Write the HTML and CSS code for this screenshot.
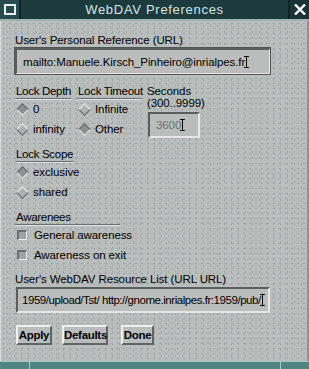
FILE: index.html
```html
<!DOCTYPE html>
<html lang="en">
<head>
  <meta charset="UTF-8" />
  <title>WebDAV Preferences</title>
  <link rel="stylesheet" href="styles.css">
</head>
<body>
  <div class="window">
    <div class="titlebar">
      <div class="tb-btn tb-menu"><span class="tb-square"></span></div>
      <div class="tb-title">WebDAV Preferences</div>
      <div class="tb-btn tb-close">
        <svg width="12" height="11" viewBox="0 0 12 11">
          <path d="M1 0.5 L11 10.5 M11 0.5 L1 10.5" stroke="#ffffff" stroke-width="2.4" />
        </svg>
      </div>
    </div>

    <div class="panel">
      <div class="field-label">User's Personal Reference (URL)</div>
      <div class="entry entry-focus">
        <span>mailto:Manuele.Kirsch_Pinheiro@inrialpes.fr</span><span class="caret"></span>
      </div>

      <div class="lock-grid">
        <div class="group">
          <div class="group-title">Lock Depth</div>
          <div class="opt"><span class="radio on"></span>0</div>
          <div class="opt"><span class="radio"></span>infinity</div>
        </div>
        <div class="group">
          <div class="group-title">Lock Timeout</div>
          <div class="opt"><span class="radio"></span>Infinite</div>
          <div class="opt"><span class="radio on"></span>Other</div>
        </div>
        <div class="seconds">
          <div class="sec-label">Seconds<br>(300..9999)</div>
          <div class="entry entry-small"><span>3600</span><span class="caret"></span></div>
        </div>
      </div>

      <div class="group scope">
        <div class="group-title">Lock Scope</div>
        <div class="opt"><span class="radio on"></span>exclusive</div>
        <div class="opt"><span class="radio"></span>shared</div>
      </div>

      <div class="group aware">
        <div class="group-title">Awarenees</div>
        <div class="opt"><span class="check"></span>General awareness</div>
        <div class="opt"><span class="check"></span>Awareness on exit</div>
      </div>

      <div class="field-label list-label">User's WebDAV Resource List (URL URL)</div>
      <div class="entry entry-list">
        <span>1959/upload/Tst/ http://gnome.inrialpes.fr:1959/pub/</span><span class="caret"></span>
      </div>

      <div class="buttons">
        <button class="btn btn-apply">Apply</button>
        <button class="btn btn-defaults">Defaults</button>
        <button class="btn btn-done">Done</button>
      </div>
    </div>

    <div class="bottom-strip">
      <div class="strip-part strip-left"></div>
      <div class="strip-part strip-mid"></div>
      <div class="strip-part strip-right"></div>
    </div>
  </div>
</body>
</html>
```

FILE: styles.css
```css
body {
  margin: 0;
  font-family: "Liberation Sans", Arial, sans-serif;
  font-size: 11.5px;
  letter-spacing: -0.1px;
  background: #3e6a6c;
}

.window {
  width: 309px;
  height: 369px;
  display: flex;
  flex-direction: column;
  overflow: hidden;
}

/* title bar */
.titlebar {
  height: 19px;
  flex-shrink: 0;
  display: flex;
  background: #1d3a3d;
  border-bottom: 2px solid #9fb3b2;
}

.tb-btn {
  width: 19px;
  display: flex;
  align-items: center;
  justify-content: center;
  background: #264a4e;
}

.tb-menu {
  border-right: 2px solid #0f2426;
}

.tb-square {
  width: 8px;
  height: 7px;
  border: 2px solid #e8f0f0;
}

.tb-title {
  flex: 1;
  text-align: center;
  color: #d6e4e4;
  font-size: 13px;
  letter-spacing: 0.7px;
  line-height: 19px;
  background: #1d3a3d;
}

.tb-close {
  width: 19px;
  background: #1a3336;
  border-left: 2px solid #0f2426;
}

/* main panel */
.panel {
  flex: 1;
  background-color: #b9bdbc;
  background-image:
    radial-gradient(circle, #96a3a7 0.5px, transparent 0.8px),
    radial-gradient(circle, #a0a6a8 0.5px, transparent 0.8px);
  background-size: 6px 5px, 7px 6px;
  background-position: 0 0, 3px 2px;
  border-left: 1px solid #d8dcdc;
  border-right: 2px solid #8c9292;
  padding: 12px 0 0 14px;
  color: #000;
}

.field-label {
  line-height: 14px;
  height: 14px;
  white-space: nowrap;
}

.entry {
  box-sizing: border-box;
  display: flex;
  align-items: center;
  background: #babdbc;
  border-top: 2px solid #5a5e5e;
  border-left: 2px solid #5a5e5e;
  border-bottom: 2px solid #e6e8e8;
  border-right: 2px solid #e6e8e8;
  padding-left: 5px;
  white-space: nowrap;
  overflow: hidden;
}

.entry-focus {
  width: 257px;
  height: 28px;
  margin-left: -1px;
  outline: 1px solid #505454;
  outline-offset: -1px;
  border-top-width: 3px;
  border-left-width: 3px;
  padding-left: 6px;
  padding-top: 1px;
}

.caret {
  display: inline-block;
  width: 1px;
  height: 12px;
  background: #000;
  margin-left: 1px;
  position: relative;
  flex-shrink: 0;
}

.caret::before,
.caret::after {
  content: "";
  position: absolute;
  left: -2px;
  width: 5px;
  height: 1px;
  background: #000;
}

.caret::before { top: 0; }
.caret::after { bottom: 0; }

/* lock options grid */
.lock-grid {
  display: grid;
  grid-template-columns: 62px 70px auto;
  margin-top: 9px;
}

.group-title {
  line-height: 14px;
  white-space: nowrap;
  letter-spacing: -0.3px;
  border-bottom: 1px solid #6a6f6f;
  box-shadow: 0 1px 0 #dfe3e3;
  margin-bottom: 3px;
  margin-right: 6px;
  padding-left: 1px;
}

.opt {
  height: 20px;
  line-height: 14px;
  display: flex;
  align-items: flex-start;
  white-space: nowrap;
}

.radio {
  width: 12px;
  height: 12px;
  margin: 1px 5px 0 1px;
  position: relative;
  flex-shrink: 0;
}

.radio::before {
  content: "";
  position: absolute;
  left: 2px;
  top: 2px;
  width: 7px;
  height: 7px;
  transform: rotate(45deg);
  background: #aeb2b2;
  border-top: 1px solid #f2f4f4;
  border-left: 1px solid #f2f4f4;
  border-bottom: 1px solid #5c6060;
  border-right: 1px solid #5c6060;
}

.radio.on::before {
  background: #8c9090;
  border-top-color: #5c6060;
  border-left-color: #5c6060;
  border-bottom-color: #f2f4f4;
  border-right-color: #f2f4f4;
}

.sec-label {
  line-height: 12px;
  margin-top: 1px;
  white-space: nowrap;
}

.entry-small {
  width: 52px;
  height: 26px;
  margin: 3px 0 0 1px;
  color: #6c7070;
  padding-left: 6px;
}

.scope {
  width: 65px;
  margin-top: 5px;
}

.aware {
  width: 111px;
  margin-top: 5px;
}

.aware .opt {
  padding-left: 1px;
}

.check {
  box-sizing: border-box;
  width: 10px;
  height: 10px;
  margin: 2px 7px 0 1px;
  background: #9ea2a2;
  border-top: 2px solid #6a6e6e;
  border-left: 2px solid #6a6e6e;
  border-bottom: 1px solid #eceeee;
  border-right: 1px solid #eceeee;
  flex-shrink: 0;
}

.list-label {
  margin-top: 4px;
}

.entry-list {
  width: 254px;
  height: 26px;
  margin: 1px 0 0 1px;
  padding-left: 4px;
  letter-spacing: -0.45px;
}

/* buttons */
.buttons {
  display: flex;
  margin-top: 12px;
  padding-left: 1px;
}

.btn {
  box-sizing: border-box;
  height: 20px;
  padding: 0;
  font-family: "Liberation Sans", Arial, sans-serif;
  font-size: 11.5px;
  letter-spacing: -0.3px;
  font-weight: bold;
  color: #000;
  background: #b9bdbd;
  border-top: 2px solid #eef0f0;
  border-left: 2px solid #eef0f0;
  border-bottom: 2px solid #606464;
  border-right: 2px solid #606464;
  border-radius: 0;
  line-height: 14px;
  white-space: nowrap;
}

.btn-apply {
  width: 36px;
}

.btn-defaults {
  width: 46px;
  margin-left: 10px;
}

.btn-done {
  width: 33px;
  margin-left: 13px;
}

/* bottom strip */
.bottom-strip {
  height: 7px;
  flex-shrink: 0;
  display: flex;
  border-top: 1px solid #a9c6c4;
}

.strip-part {
  background: #4e8583;
}

.strip-left {
  width: 29px;
  border-right: 1px solid #a9c6c4;
}

.strip-mid {
  flex: 1;
  border-right: 1px solid #a9c6c4;
}

.strip-right {
  width: 28px;
}
```
